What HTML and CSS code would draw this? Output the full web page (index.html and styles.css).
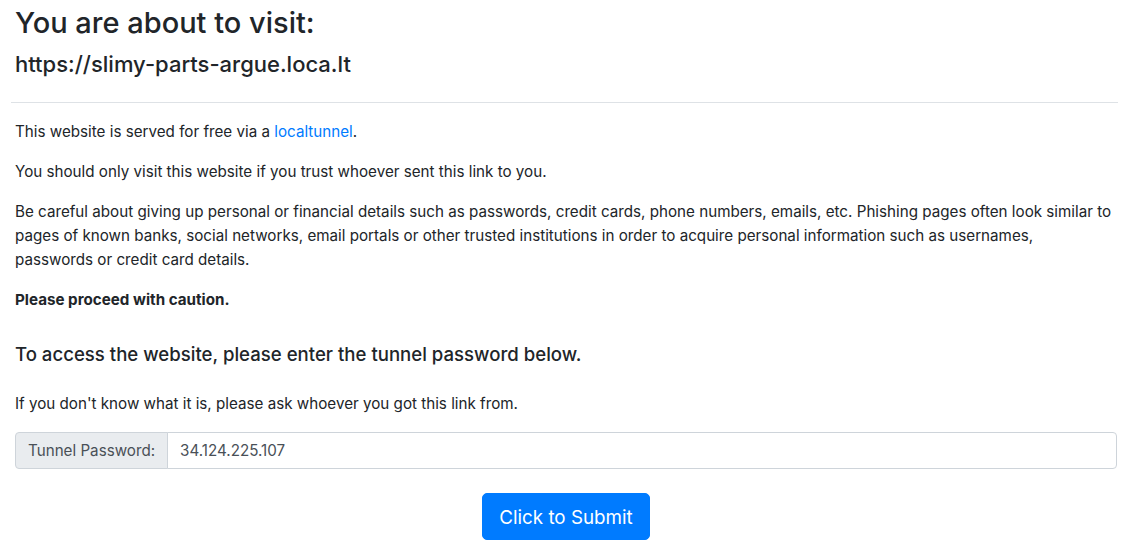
FILE: index.html
```html
<!DOCTYPE html>
<html>
<head>
<meta charset="utf-8">
<link rel="stylesheet" href="styles.css">
</head>
<body>
<div class="page">
  <h2 class="title">You are about to visit:</h2>
  <h3 class="url">https://slimy-parts-argue.loca.lt</h3>
  <hr class="rule">
  <p>This website is served for free via a <a href="#">localtunnel</a>.</p>
  <p>You should only visit this website if you trust whoever sent this link to you.</p>
  <p>Be careful about giving up personal or financial details such as passwords, credit cards, phone numbers, emails, etc. Phishing pages often look similar to pages of known banks, social networks, email portals or other trusted institutions in order to acquire personal information such as usernames,<br>passwords or credit card details.</p>
  <p><b>Please proceed with caution.</b></p>
  <h5 class="access">To access the website, please enter the tunnel password below.</h5>
  <p>If you don't know what it is, please ask whoever you got this link from.</p>
  <form class="form">
    <div class="input-group">
      <span class="prepend">Tunnel Password:</span>
      <input class="field" type="text" value="34.124.225.107">
    </div>
    <div class="actions">
      <button class="btn" type="button">Click to Submit</button>
    </div>
  </form>
</div>
</body>
</html>
```
FILE: styles.css
```css
* { box-sizing: border-box; }
html, body { margin: 0; padding: 0; background: #fff; }
body {
  font-family: Inter, "Liberation Sans", Arial, sans-serif;
  font-size: 15.2px;
  line-height: 24px;
  color: #212529;
}
.page { padding: 0 18px 0 15px; }
.title {
  margin: 0;
  padding-top: 3px;
  font-size: 29px;
  line-height: 40px;
  font-weight: 500;
}
.url {
  margin: 5px 0 0;
  font-size: 22px;
  line-height: 32px;
  font-weight: 500;
}
.rule {
  margin: 22px -1px 17px -4px;
  border: 0;
  border-top: 1px solid #dee2e6;
}
p { margin: 0 0 16px; }
a { color: #007bff; text-decoration: none; }
b { font-weight: 700; }
.access {
  margin: 27px 0 23px;
  font-size: 18.6px;
  line-height: 30px;
  font-weight: 500;
}
.input-group { display: flex; height: 37px; }
.prepend {
  display: flex;
  align-items: center;
  padding: 0 12px;
  background: #e9ecef;
  border: 1px solid #ced4da;
  border-radius: 4px 0 0 4px;
  color: #495057;
  font-size: 15.2px;
  white-space: nowrap;
}
.field {
  flex: 1;
  min-width: 0;
  margin-left: -1px;
  padding: 0 12px;
  border: 1px solid #ced4da;
  border-radius: 0 4px 4px 0;
  font-family: inherit;
  font-size: 15.2px;
  color: #495057;
  outline: none;
}
.actions { display: flex; justify-content: center; margin-top: 24px; }
.btn {
  background: #007bff;
  color: #fff;
  border: 1px solid #007bff;
  border-radius: 5px;
  font-family: inherit;
  font-size: 18.8px;
  line-height: 29px;
  padding: 9px 16px 7px;
  cursor: pointer;
}
```
